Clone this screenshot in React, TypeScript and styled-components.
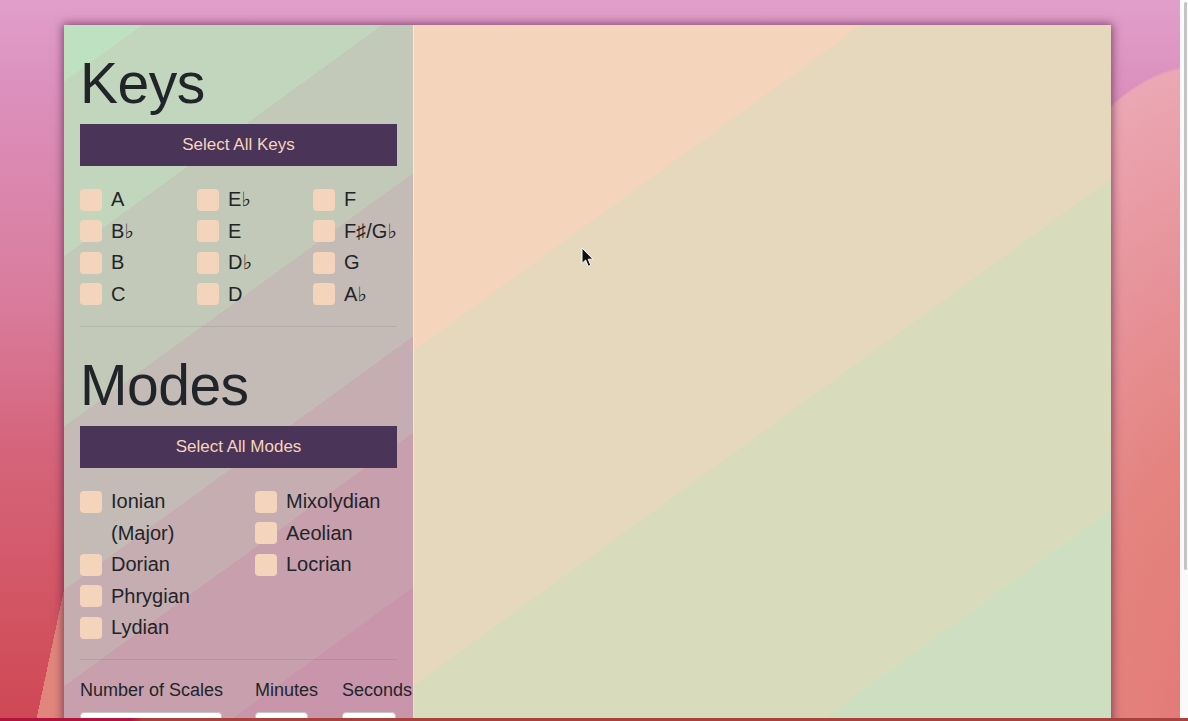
import React from 'react';
import styled, { createGlobalStyle } from 'styled-components';

const GlobalStyle = createGlobalStyle`
  html, body {
    margin: 0;
    padding: 0;
  }
  body {
    font-family: 'Liberation Sans', Arial, 'DejaVu Sans', sans-serif;
    color: #212529;
  }
  * {
    box-sizing: border-box;
  }
`;

const Viewport = styled.div`
  width: 1188px;
  height: 721px;
  display: flex;
  flex-direction: column;
  overflow: hidden;
`;

const Screen = styled.div`
  display: flex;
  flex-direction: row;
  height: 718px;
`;

const Page = styled.div`
  flex: 1;
  overflow: hidden;
  padding: 25px 0 0 64px;
  background:
    linear-gradient(102deg, transparent 62.5px, #e0867c 62.5px) 0 590px / 64px 131px no-repeat,
    radial-gradient(ellipse 260px 655px at 1200px 720px, #e37a76 0%, #e4837f 40%, #e7939a 70%, #eaa2ad 92%, #eba8b4 99.5%, transparent 100%),
    linear-gradient(180deg, #e09fca 0%, #dc90bd 12%, #d97c9c 42%, #d5657c 62%, #d2525f 88%, #cf4856 100%);
`;

const Scrollbar = styled.div`
  width: 8px;
  background: #fafafa;
  padding: 2px 1px 0 4px;
`;

const Thumb = styled.div`
  height: 568px;
  border-radius: 2px;
  background: #c4c4c4;
`;

const BottomBar = styled.div`
  height: 3px;
  background: linear-gradient(90deg, #b3123f 0 11%, #a9413d 12%);
`;

const AppFrame = styled.div`
  width: 1047px;
  min-height: 760px;
  display: flex;
  flex-direction: row;
  box-shadow: 0 0 9px 1px rgba(60, 10, 50, 0.6);
`;

const Sidebar = styled.aside`
  width: 350px;
  flex-shrink: 0;
  padding: 24px 16px 0;
  border-right: 1px solid rgba(255, 255, 255, 0.6);
  background: linear-gradient(
    144deg,
    #bee2c1 0 46px,
    #c1d6bd 46px 187px,
    #c3c9b9 187px 325px,
    #c4bab6 325px 457px,
    #c6adb1 457px 535px,
    #c89fad 535px 660px,
    #c995ab 660px
  );
`;

const Main = styled.main`
  flex: 1;
  position: relative;
  background: linear-gradient(
    144deg,
    #f5d4bc 0 263px,
    #e5d8bc 263px 534px,
    #d8dbbc 534px 802px,
    #cddfc0 802px
  );
`;

const Cursor = styled.svg`
  position: absolute;
  left: 167px;
  top: 222px;
`;

const Heading = styled.h1`
  margin: 0 0 7px;
  font-size: 57px;
  font-weight: 400;
  line-height: 1.2;
  letter-spacing: -0.5px;
  color: #212529;
`;

const SelectButton = styled.button`
  display: block;
  width: 317px;
  height: 42px;
  border: none;
  border-radius: 0;
  background: #4a3457;
  color: #f6d5bd;
  font-family: 'Liberation Sans', Arial, sans-serif;
  font-size: 17px;
  cursor: pointer;
`;

const OptionGrid = styled.div<{ $cols: string }>`
  display: grid;
  grid-template-columns: ${(p) => p.$cols};
  margin-top: 18px;
`;

const Column = styled.div`
  display: flex;
  flex-direction: column;
`;

const CheckItem = styled.label`
  display: flex;
  align-items: flex-start;
  font-size: 20px;
  line-height: 31.4px;
  color: #212529;
  white-space: nowrap;
`;

const Box = styled.span`
  width: 22px;
  height: 22px;
  flex-shrink: 0;
  margin: 4.5px 9px 0 0;
  border-radius: 4px;
  background: #f5d4bc;
`;

const LabelText = styled.span<{ $wrap?: boolean }>`
  white-space: ${(p) => (p.$wrap ? 'normal' : 'nowrap')};
  max-width: ${(p) => (p.$wrap ? '118px' : 'none')};
`;

const Divider = styled.hr`
  margin: 16px 0 24px;
  border: none;
  border-top: 1px solid rgba(0, 0, 0, 0.08);
`;

const SettingsRow = styled.div`
  display: grid;
  grid-template-columns: 175px 87px 1fr;
  margin-top: -7px;
`;

const Field = styled.div`
  display: flex;
  flex-direction: column;
`;

const FieldLabel = styled.span`
  font-size: 18px;
  line-height: 27px;
  white-space: nowrap;
  color: #212529;
`;

const NumberInput = styled.input<{ $w: number }>`
  width: ${(p) => p.$w}px;
  height: 36px;
  margin-top: 8px;
  border: 1px solid #c9c3c3;
  border-radius: 4px;
  background: #fff;
`;

const keyColumns = [
  ['A', 'B♭', 'B', 'C'],
  ['E♭', 'E', 'D♭', 'D'],
  ['F', 'F♯/G♭', 'G', 'A♭'],
];

const modeColumns = [
  ['Ionian (Major)', 'Dorian', 'Phrygian', 'Lydian'],
  ['Mixolydian', 'Aeolian', 'Locrian'],
];

const Option = ({ label, wrap }: { label: string; wrap?: boolean }) => (
  <CheckItem>
    <Box />
    <LabelText $wrap={wrap}>{label}</LabelText>
  </CheckItem>
);

const App = () => {
  return (
    <Viewport>
      <GlobalStyle />
      <Screen>
        <Page>
          <AppFrame>
            <Sidebar>
              <Heading>Keys</Heading>
              <SelectButton>Select All Keys</SelectButton>
              <OptionGrid $cols="117px 116px 116px">
                {keyColumns.map((col, i) => (
                  <Column key={i}>
                    {col.map((k) => (
                      <Option key={k} label={k} />
                    ))}
                  </Column>
                ))}
              </OptionGrid>
              <Divider />

              <Heading>Modes</Heading>
              <SelectButton>Select All Modes</SelectButton>
              <OptionGrid $cols="175px 175px">
                {modeColumns.map((col, i) => (
                  <Column key={i}>
                    {col.map((m) => (
                      <Option key={m} label={m} wrap />
                    ))}
                  </Column>
                ))}
              </OptionGrid>
              <Divider />

              <SettingsRow>
                <Field>
                  <FieldLabel>Number of Scales</FieldLabel>
                  <NumberInput $w={142} />
                </Field>
                <Field>
                  <FieldLabel>Minutes</FieldLabel>
                  <NumberInput $w={53} />
                </Field>
                <Field>
                  <FieldLabel>Seconds</FieldLabel>
                  <NumberInput $w={54} />
                </Field>
              </SettingsRow>
            </Sidebar>
            <Main>
              <Cursor width="14" height="21" viewBox="0 0 14 21">
                <path
                  d="M1 1 L1 16.5 L4.6 13 L7.3 19.3 L9.8 18.2 L7.2 12.2 L12 12.2 Z"
                  fill="#111"
                  stroke="#fff"
                  strokeWidth="1"
                  strokeLinejoin="round"
                />
              </Cursor>
            </Main>
          </AppFrame>
        </Page>
        <Scrollbar>
          <Thumb />
        </Scrollbar>
      </Screen>
      <BottomBar />
    </Viewport>
  );
};

export default App;
